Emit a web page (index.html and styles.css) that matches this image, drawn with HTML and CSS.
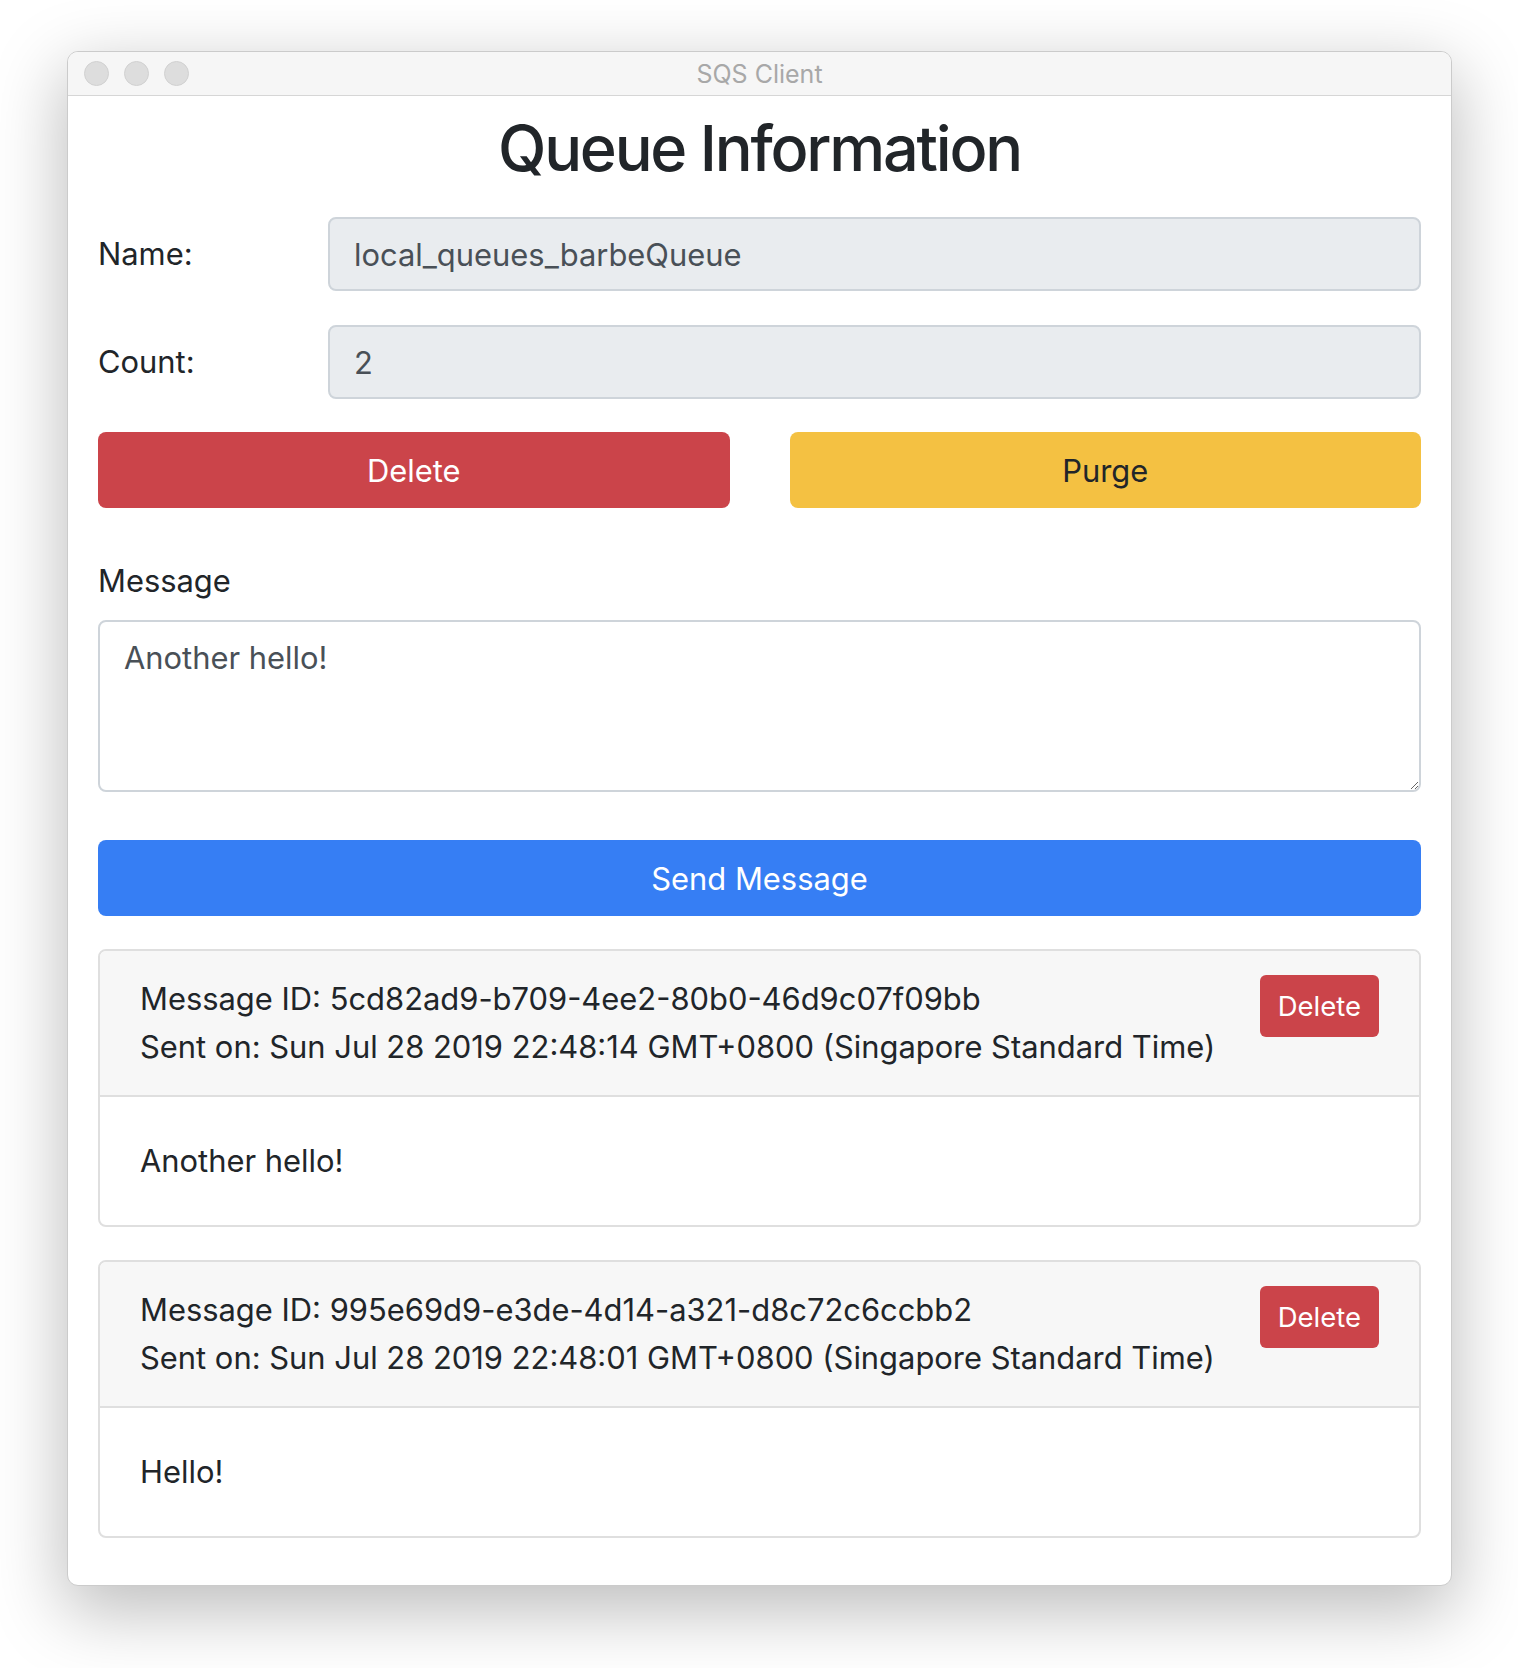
FILE: index.html
```html
<!DOCTYPE html>
<html>
<head>
    <title>SQS Client</title>
    <link rel="stylesheet" href="styles.css">
</head>
<body>
    <div class="window">
        <div class="titlebar">
            <div class="lights">
                <span class="light"></span>
                <span class="light"></span>
                <span class="light"></span>
            </div>
            <div class="title">SQS Client</div>
            <div></div>
        </div>

        <div class="content">
            <h2 class="heading">Queue Information</h2>

            <div class="form-row">
                <label class="row-label">Name:</label>
                <input type="text" class="form-control" value="local_queues_barbeQueue" readonly>
            </div>
            <div class="form-row last">
                <label class="row-label">Count:</label>
                <input type="text" class="form-control" value="2" readonly>
            </div>

            <div class="actions">
                <button class="btn btn-danger">Delete</button>
                <button class="btn btn-warning">Purge</button>
            </div>

            <label class="msg-label">Message</label>
            <textarea class="form-control msg-input">Another hello!</textarea>

            <button class="btn btn-primary btn-block">Send Message</button>

            <div class="card">
                <div class="card-header">
                    <div>
                        <div>Message ID: 5cd82ad9-b709-4ee2-80b0-46d9c07f09bb</div>
                        <div>Sent on: Sun Jul 28 2019 22:48:14 GMT+0800 (Singapore Standard Time)</div>
                    </div>
                    <button class="btn btn-danger btn-sm">Delete</button>
                </div>
                <div class="card-body">Another hello!</div>
            </div>

            <div class="card">
                <div class="card-header">
                    <div>
                        <div>Message ID: 995e69d9-e3de-4d14-a321-d8c72c6ccbb2</div>
                        <div>Sent on: Sun Jul 28 2019 22:48:01 GMT+0800 (Singapore Standard Time)</div>
                    </div>
                    <button class="btn btn-danger btn-sm">Delete</button>
                </div>
                <div class="card-body">Hello!</div>
            </div>
        </div>
    </div>
</body>
</html>
```

FILE: styles.css
```css
body{
    margin: 0;
    padding: 51px 0 83px 0;
    background-color: #ffffff;
    font-family: Inter, "Noto Sans", sans-serif;
    color: #212529;
}
.window{
    width: 1383px;
    margin-left: 67px;
    border: 1px solid #cbcbcb;
    border-radius: 11px;
    background-color: white;
    box-shadow: 0 22px 70px 4px rgba(0,0,0,0.26);
    overflow: hidden;
}
.titlebar{
    height: 43px;
    display: grid;
    grid-template-columns: 1fr auto 1fr;
    align-items: center;
    background-color: #f6f6f6;
    border-bottom: 1px solid #d6d6d6;
}
.lights{
    display: flex;
    gap: 15px;
    padding-left: 16px;
}
.light{
    width: 23px;
    height: 23px;
    border-radius: 50%;
    background-color: #dddddd;
    border: 1px solid #d0d0d0;
}
.title{
    font-size: 25px;
    color: #a8a8a8;
}
.content{
    padding: 14px 30px 47px 30px;
    font-size: 30.9px;
    line-height: 48px;
}
.heading{
    margin: 0 0 30px 0;
    font-size: 63px;
    font-weight: 450;
    letter-spacing: -2.2px;
    line-height: 77px;
    text-align: center;
}
.form-row{
    display: flex;
    align-items: center;
    margin-bottom: 34px;
}
.form-row.last{
    margin-bottom: 33px;
}
.row-label{
    width: 230px;
    flex-shrink: 0;
}
.form-control{
    box-sizing: border-box;
    width: 100%;
    height: 74px;
    padding: 0 24px;
    font-family: inherit;
    font-size: 30.9px;
    color: #495057;
    background-color: #e9ecef;
    border: 2px solid #ced4da;
    border-radius: 8px;
    outline: none;
}
.actions{
    display: flex;
    gap: 60px;
    margin-bottom: 49px;
}
.btn{
    height: 76px;
    border: none;
    border-radius: 8px;
    font-family: inherit;
    font-size: 30.9px;
    padding: 0 24px;
}
.actions .btn{
    flex: 1;
}
.btn-danger{
    background-color: #cb444a;
    color: white;
}
.btn-warning{
    background-color: #f4c142;
    color: #212529;
}
.btn-primary{
    background-color: #367ef4;
    color: white;
}
.btn-block{
    display: block;
    width: 100%;
    margin: 48px 0 33px 0;
}
.msg-label{
    display: block;
    margin-bottom: 15px;
}
.msg-input{
    display: block;
    height: 172px;
    padding: 12px 24px;
    line-height: 48px;
    background-color: white;
}
.card{
    border: 2px solid #dfdfdf;
    border-radius: 8px;
    margin-bottom: 33px;
    overflow: hidden;
}
.card:last-child{
    margin-bottom: 0;
}
.card-header{
    display: flex;
    justify-content: space-between;
    align-items: flex-start;
    padding: 24px 40px;
    background-color: #f7f7f7;
    border-bottom: 2px solid #dfdfdf;
}
.card-body{
    padding: 40px;
}
.btn-sm{
    height: 62px;
    padding: 0 18px;
    font-size: 27.5px;
    border-radius: 6px;
}
```
